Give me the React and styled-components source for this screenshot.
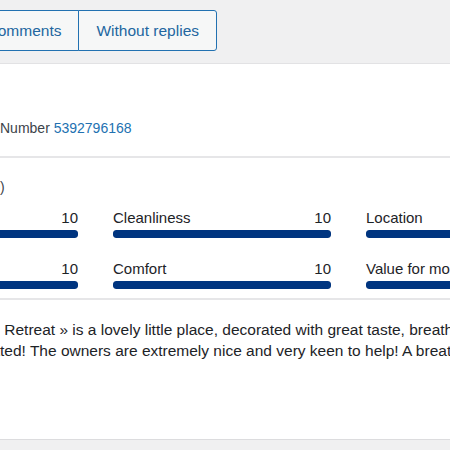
import React from "react";
import styled, { createGlobalStyle } from "styled-components";

const GlobalStyle = createGlobalStyle`
  html, body {
    margin: 0;
    padding: 0;
    background: #f0f0f1;
  }
  body {
    font-family: "Liberation Sans", Arial, sans-serif;
    color: #1d2327;
  }
`;

const ratings = [
  { label: "Staff", score: 10 },
  { label: "Cleanliness", score: 10 },
  { label: "Location", score: 10 },
  { label: "Facilities", score: 10 },
  { label: "Comfort", score: 10 },
  { label: "Value for money", score: 10 },
];

const App = () => {
  return (
    <Page>
      <GlobalStyle />
      <TabBar>
        <Tab>All comments</Tab>
        <Tab $last>Without replies</Tab>
      </TabBar>

      <Card>
        <Header>
          <Line>
            <Cut>Booking </Cut>
            Number <Link>5392796168</Link>
          </Line>
        </Header>

        <Ratings>
          <Line>
            <Cut>Guest ratings (10</Cut>)
          </Line>
          <Grid>
            {ratings.map((r) => (
              <Rating key={r.label}>
                <RatingHead>
                  <span>{r.label}</span>
                  <span>{r.score}</span>
                </RatingHead>
                <Track>
                  <Fill style={{ width: `${r.score * 10}%` }} />
                </Track>
              </Rating>
            ))}
          </Grid>
        </Ratings>

        <Review>
          <Line>
            <Cut>« Lakeside</Cut> Retreat » is a lovely little place, decorated
            with great taste, breathtaking views
          </Line>
          <Line>
            <Cut>situa</Cut>ted! The owners are extremely nice and very keen to
            help! A breathtaking stay
          </Line>
        </Review>
      </Card>
    </Page>
  );
};

export default App;

const Page = styled.div`
  width: 450px;
  height: 450px;
  overflow: hidden;
  padding-top: 10px;
  box-sizing: border-box;
`;

const TabBar = styled.div`
  display: flex;
  justify-content: flex-end;
  width: 217px;
  height: 41px;
`;

const Tab = styled.button`
  flex: none;
  height: 41px;
  padding: 0 17px;
  margin-left: -1px;
  border: 1px solid #2271b1;
  border-radius: ${(p) => (p.$last ? "0 3px 3px 0" : "3px 0 0 3px")};
  background: #f6f7f7;
  color: #22669f;
  font-family: "Liberation Sans", Arial, sans-serif;
  font-size: 15.5px;
  white-space: nowrap;
`;

const Card = styled.div`
  margin-top: 12px;
  margin-left: -160px;
  width: 900px;
  background: #fff;
  border-top: 1px solid #e2e2e4;
  border-bottom: 1px solid #dcdcde;
`;

const Line = styled.div`
  display: flex;
  white-space: pre;
  margin-left: 160px;
  line-height: 20px;
`;

const Cut = styled.span`
  display: flex;
  justify-content: flex-end;
  width: 0;
`;

const Header = styled.div`
  height: 94px;
  box-sizing: border-box;
  display: flex;
  align-items: flex-end;
  padding-bottom: 18px;
  border-bottom: 2px solid #e6e6e8;
  font-size: 14px;
  color: #3c434a;
`;

const Link = styled.span`
  color: #2271b1;
`;

const Ratings = styled.div`
  padding: 19px 0 9px;
  border-bottom: 2px solid #e6e6e8;
  font-size: 14px;
  color: #3c434a;
`;

const Grid = styled.div`
  display: grid;
  grid-template-columns: repeat(3, 218px);
  column-gap: 35px;
  row-gap: 21px;
  margin: 11px 0 0 20px;
`;

const Rating = styled.div`
  display: flex;
  flex-direction: column;
  gap: 2px;
`;

const RatingHead = styled.div`
  display: flex;
  justify-content: space-between;
  font-size: 15px;
  line-height: 20px;
  color: #1d2327;
`;

const Track = styled.div`
  height: 8px;
  border-radius: 3px;
  background: #e6e6e8;
  overflow: hidden;
`;

const Fill = styled.div`
  height: 100%;
  border-radius: 3px;
  background: #003580;
`;

const Review = styled.div`
  height: 139px;
  box-sizing: border-box;
  padding-top: 19px;
  font-size: 15.5px;
  color: #1d2327;
  ${Line} {
    line-height: 21px;
  }
`;
